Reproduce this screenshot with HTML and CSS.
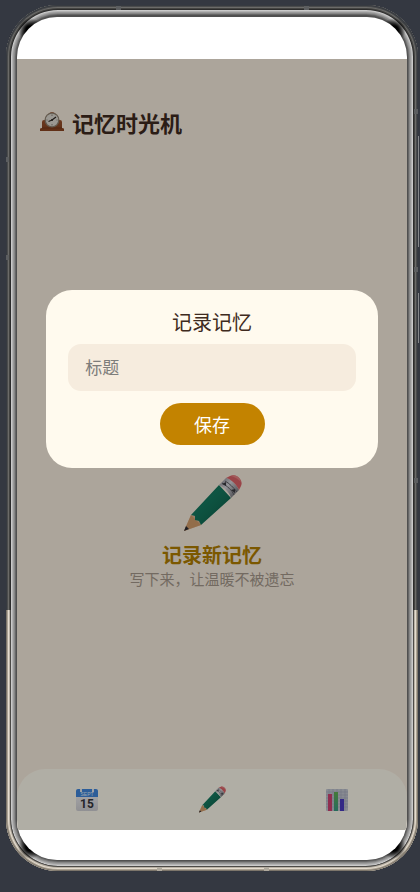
FILE: index.html
```
<!DOCTYPE html>
<html lang="zh-CN">
<head>
  <meta charset="UTF-8" />
  <meta name="viewport" content="width=device-width, initial-scale=1.0" />
  <title>记忆时光机</title>
  <link rel="stylesheet" href="styles.css">
</head>
<body>
  <svg class="symbols" aria-hidden="true">
    <defs>
      <linearGradient id="green" x1="0" y1="0" x2="1" y2="1">
        <stop offset="0" stop-color="#0c5a42" />
        <stop offset=".4" stop-color="#157a60" />
        <stop offset=".6" stop-color="#127058" />
        <stop offset="1" stop-color="#064936" />
      </linearGradient>
      <linearGradient id="metal" x1="0" y1="0" x2="1" y2="1">
        <stop offset="0" stop-color="#7c7c84" />
        <stop offset=".4" stop-color="#d6d6dc" />
        <stop offset="1" stop-color="#56565c" />
      </linearGradient>
      <linearGradient id="wood" x1="0" y1="0" x2="0" y2="1">
        <stop offset="0" stop-color="#a85a34" />
        <stop offset="1" stop-color="#8c4724" />
      </linearGradient>
      <linearGradient id="paper" x1="0" y1="0" x2="0" y2="1">
        <stop offset="0" stop-color="#f4f4f6" />
        <stop offset="1" stop-color="#cfcfd3" />
      </linearGradient>
      <linearGradient id="barGreen" x1="0" y1="0" x2="0" y2="1">
        <stop offset="0" stop-color="#62b052" />
        <stop offset="1" stop-color="#389a86" />
      </linearGradient>
    </defs>
    <symbol id="pencil" viewBox="0 0 60 60">
      <path d="M2 57 L9 41 L19 51 Z" fill="#dfae7c" />
      <path d="M9 41 L13 42 L13 46 L18 47 L19 51 L2 57 Z" fill="#c98f60" opacity=".6" />
      <path d="M2 57 L4 52 L7 55 Z" fill="#2c2c34" />
      <path d="M9 41 L37 11 L49 24 L19 51 L17 47 L13 46 L13 42 Z" fill="url(#green)" />
      <path d="M37 11 L44 4 C49 5 55 11 57 16 L49 24 C47 18 43 14 37 11 Z" fill="url(#metal)" />
      <path d="M40 9 C45 12 50 16 52 21 M43 7 C47 9 52 14 55 18" fill="none" stroke="#5c5c62" stroke-width="1" />
      <path d="M40 10 l4 -2 l0 4 Z M49 16 l4 -1 l0 4 Z" fill="#3a3a40" />
      <path d="M44 4 L48 2 C54 -1 62 6 59 12 L57 16 C55 11 49 5 44 4 Z" fill="#dc6268" />
      <path d="M49 2 C53 0 58 3 59 8 C56 5 53 3 49 2 Z" fill="#e88484" />
    </symbol>
  </svg>

  <div class="phone">
    <span class="antenna antenna-top-left"></span>
    <span class="antenna antenna-top-right"></span>
    <span class="antenna antenna-left-upper"></span>
    <span class="antenna antenna-left-lower"></span>
    <span class="antenna antenna-right-upper"></span>
    <span class="antenna antenna-right-middle"></span>
    <span class="antenna antenna-right-lower"></span>
    <span class="antenna antenna-bottom-left"></span>
    <span class="antenna antenna-bottom-right"></span>
    <span class="side-key volume-key"></span>
    <span class="side-key power-key"></span>

    <div class="screen">
      <div class="app">
        <header class="app-header">
          <svg class="clock-icon" viewBox="0 0 24 20" aria-hidden="true">
            <path d="M2 16 V10 Q2 8 4 8 H6 Q8 0 12 0 Q16 0 19 8 H20 Q22 8 22 10 V16 Z" fill="url(#wood)" />
            <path d="M0 19 V17 Q0 16 2 16 H22 Q24 16 24 17 V19 Z" fill="#8c4522" />
            <path d="M2 16 H22" stroke="#6a2f16" stroke-width=".6" />
            <circle cx="12" cy="8" r="7.500" fill="#8e806f" />
            <circle cx="12" cy="8" r="6.200" fill="#dedad2" />
            <path d="M12 8 L16 5 M12 8 L8.500 9.500" stroke="#2e2722" stroke-width="1.200" />
            <circle cx="12" cy="8" r="1" fill="#2e2722" />
            <path d="M12 2.500 V4 M12 12 V13.500 M6.500 8 H7.500 M16.500 8 H17.500" stroke="#776c60" stroke-width=".8" />
          </svg>
          <h1>记忆时光机</h1>
        </header>

        <main class="record">
          <svg class="record-icon" aria-hidden="true"><use href="#pencil" /></svg>
          <h2>记录新记忆</h2>
          <p>写下来，让温暖不被遗忘</p>
        </main>

        <nav class="tab-bar">
          <a href="#calendar" aria-label="日历">
            <svg class="tab-icon" viewBox="0 0 22 22">
              <rect width="22" height="22" rx="2" fill="url(#paper)" />
              <path d="M2 0 H20 Q22 0 22 2 V8 H0 V2 Q0 0 2 0 Z" fill="#3f86dc" />
              <path d="M4 0 H6 V3 H4 Z M16 0 H18 V3 H16 Z" fill="#e4e8ee" />
              <text class="calendar-month" x="11" y="7">SEPT</text>
              <text class="calendar-day" x="11" y="19">15</text>
            </svg>
          </a>
          <a href="#record" aria-label="记录">
            <svg class="tab-icon tab-pencil"><use href="#pencil" /></svg>
          </a>
          <a href="#stats" aria-label="统计">
            <svg class="tab-icon" viewBox="0 0 22 22">
              <rect width="22" height="22" rx="1" fill="#c3c7d2" />
              <path d="M0 3 H22 M0 6 H22 M0 9 H22 M0 12 H22 M0 15 H22 M0 18 H22 M3 0 V22 M7 0 V22 M11 0 V22 M15 0 V22 M19 0 V22" stroke="#a3aabd" stroke-width=".6" />
              <rect x="2" y="5" width="4" height="17" fill="#cf4272" />
              <rect x="8" y="3" width="4" height="19" fill="url(#barGreen)" />
              <rect x="14" y="10" width="4" height="12" fill="#4a3cc0" />
            </svg>
          </a>
        </nav>

        <div class="overlay">
          <form class="modal" role="dialog" aria-labelledby="modalTitle">
            <h3 id="modalTitle">记录记忆</h3>
            <input type="text" id="memoryTitle" placeholder="标题" aria-label="标题" />
            <button type="button">保存</button>
          </form>
        </div>
      </div>
    </div>
  </div>
</body>
</html>
```

FILE: styles.css
```
:root {
  --backdrop: #343841;
  --page-bg: #f7ecde;
  --card-bg: #fffaee;
  --input-bg: #f6ecde;
  --gold: #c38300;
  --text-dark: #3e2a20;
  --text-muted: #a5998c;
}
* {
  box-sizing: border-box;
}
body {
  display: flex;
  min-height: 100vh;
  margin: 0;
  padding: 5px 2px 21px 6px;
  background: var(--backdrop);
  font-family: "Noto Sans CJK SC", "Noto Sans", sans-serif;
  color: var(--text-dark);
}
h1, h2, h3, p {
  margin: 0;
}
.symbols {
  position: absolute;
  width: 0;
  height: 0;
}

/* phone frame: one inset ring per pixel of metal */
.phone {
  position: relative;
  display: flex;
  flex: 1;
  padding: 12px 11px 11px;
  border-radius: 52px;
  background: #505050;
  box-shadow:
    inset 0 0 0 1px #363a40,
    inset 0 0 0 2px #4a4b4c,
    inset 0 0 0 3px #6b6b69,
    inset 0 0 0 4px #444442,
    inset 0 0 0 5px #2c2c2c,
    inset 0 0 0 6px #cacaca,
    inset 0 0 0 7px #b2b2b2,
    inset 0 0 0 8px #9a9a9a,
    inset 0 0 0 9px #868686,
    inset 0 0 0 10px #666;
}
.phone::before,
.phone::after {
  content: "";
  position: absolute;
  inset: 0;
  border-radius: 52px;
}
.phone::before {
  z-index: 1;
  background:
    radial-gradient(circle at 24px 25px, #000 4px, transparent 12px),
    radial-gradient(circle at calc(100% - 24px) 25px, #000 4px, transparent 12px),
    radial-gradient(circle at 24px calc(100% - 24px), #000 4px, transparent 12px),
    radial-gradient(circle at calc(100% - 24px) calc(100% - 24px), #000 4px, transparent 12px);
}
.phone::after {
  clip-path: inset(605px 0 0 0);
  box-shadow:
    inset 0 0 0 1px #7d766b,
    inset 0 0 0 2px #aca394,
    inset 0 0 0 3px #e4dccf,
    inset 0 0 0 4px #b9b1a4,
    inset 0 0 0 5px #4c4a47;
}
.antenna {
  position: absolute;
  z-index: 1;
  background: #5c5e60;
}
.antenna-top-left, .antenna-top-right {
  top: 1px;
  width: 5px;
  height: 4px;
}
.antenna-top-left { left: 110px; }
.antenna-top-right { right: 109px; }
.antenna-left-upper, .antenna-left-lower {
  left: 0;
  width: 3px;
  height: 5px;
}
.antenna-left-upper { top: 152px; }
.antenna-left-lower { top: 250px; }
.antenna-right-upper, .antenna-right-middle, .antenna-right-lower {
  right: 0;
  width: 4px;
  height: 5px;
}
.antenna-right-upper { top: 104px; }
.antenna-right-middle { top: 262px; }
.antenna-right-lower { top: 473px; }
.antenna-bottom-left, .antenna-bottom-right {
  bottom: 0;
  width: 5px;
  height: 4px;
  background: #b0aa9e;
}
.antenna-bottom-left { left: 151px; }
.antenna-bottom-right { right: 149px; }
.side-key {
  position: absolute;
  right: -1px;
  width: 1px;
  background: #85878a;
}
.volume-key {
  top: 131px;
  height: 111px;
}
.power-key {
  top: 288px;
  height: 50px;
}

.screen {
  position: relative;
  z-index: 2;
  display: flex;
  flex: 1;
  padding: 42px 0 30px;
  border-radius: 40px;
  overflow: hidden;
  background: #fff;
}
.app {
  position: relative;
  display: flex;
  flex-direction: column;
  flex: 1;
  background: var(--page-bg);
}
.app-header {
  display: flex;
  align-items: center;
  gap: 8px;
  padding: 47px 23px 0;
}
.clock-icon {
  width: 24px;
  height: 20px;
}
.app-header h1 {
  font-size: 22px;
  line-height: 32px;
}

.record {
  display: flex;
  flex: 1;
  flex-direction: column;
  align-items: center;
  justify-content: flex-end;
  padding-bottom: 179px;
}
.record-icon {
  width: 60px;
  height: 60px;
  margin-bottom: 8px;
}
.record h2 {
  font-size: 20px;
  line-height: 26px;
  color: #b07e00;
}
.record p {
  font-size: 15px;
  line-height: 22px;
  color: var(--text-muted);
}

.tab-bar {
  display: flex;
  padding: 0 8px;
  border-radius: 28px 28px 0 0;
  background: #fdf9ec;
}
.tab-bar a {
  display: flex;
  flex: 1;
  align-items: center;
  justify-content: center;
  height: 61px;
}
.tab-icon {
  width: 22px;
  height: 22px;
}
.tab-pencil {
  width: 28px;
  height: 28px;
}
.calendar-month {
  font: 5px "Liberation Sans", sans-serif;
  fill: #dce8f8;
  text-anchor: middle;
}
.calendar-day {
  font: bold 12px Roboto, sans-serif;
  fill: #35353b;
  text-anchor: middle;
}

.overlay {
  position: absolute;
  inset: 0;
  display: flex;
  align-items: center;
  justify-content: center;
  padding-bottom: 131px;
  background: rgba(0, 0, 0, 0.3);
}
.modal {
  display: flex;
  flex-direction: column;
  align-items: center;
  gap: 12px;
  width: 85%;
  padding: 22px 22px 23px;
  border-radius: 26px;
  background: var(--card-bg);
}
.modal h3 {
  font-size: 20px;
  font-weight: 400;
  line-height: 20px;
}
.modal input {
  width: 100%;
  height: 47px;
  padding: 0 17px 2px;
  border: none;
  border-radius: 13px;
  background: var(--input-bg);
  color: var(--text-dark);
  font-family: inherit;
  font-size: 17px;
}
.modal input::placeholder {
  color: #7d7d7b;
}
.modal button {
  width: 105px;
  height: 42px;
  padding: 0;
  border: none;
  border-radius: 21px;
  background: var(--gold);
  color: #fff;
  font-family: inherit;
  font-size: 18px;
  cursor: pointer;
}
```
